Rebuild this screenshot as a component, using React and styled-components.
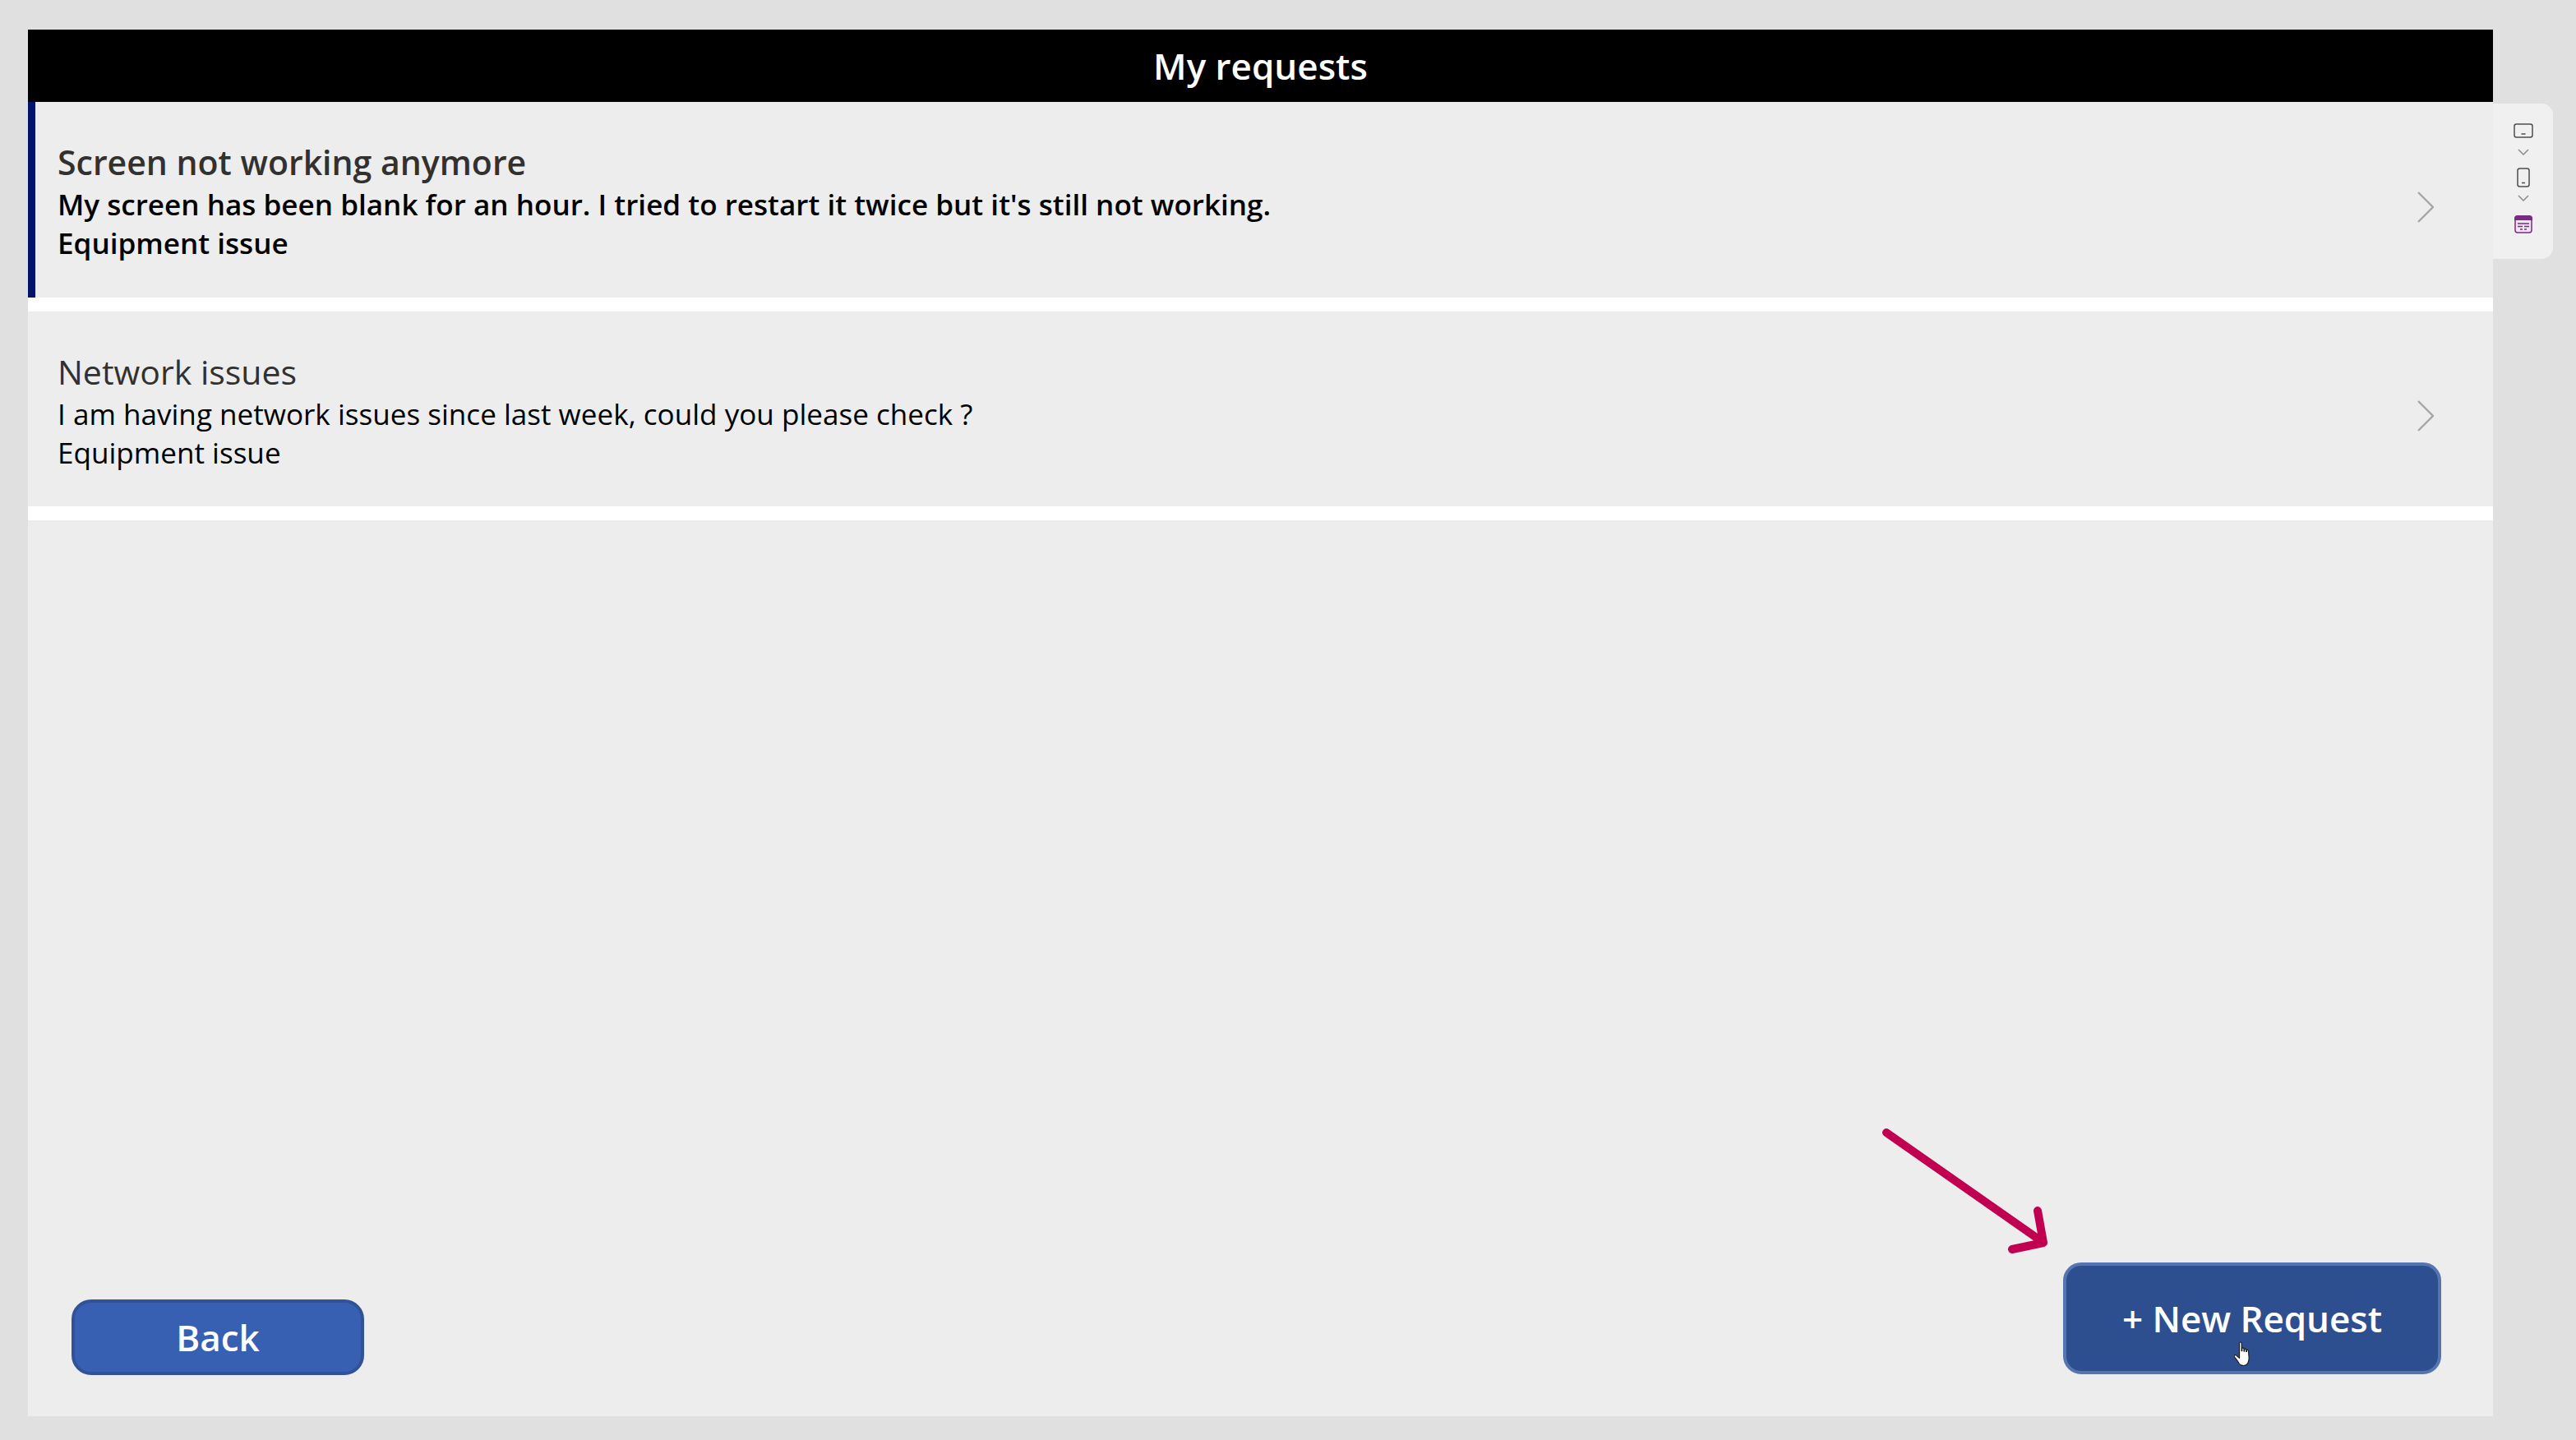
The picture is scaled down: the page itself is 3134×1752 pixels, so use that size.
import { createGlobalStyle, styled } from "styled-components";

const requests = [
  {
    title: "Screen not working anymore",
    body: "My screen has been blank for an hour. I tried to restart it twice but it's still not working.",
    category: "Equipment issue",
    selected: true,
  },
  {
    title: "Network issues",
    body: "I am having network issues since last week, could you please check ?",
    category: "Equipment issue",
    selected: false,
  },
];

const App = () => (
  <Page>
    <GlobalStyle />
    <Canvas>
      <Header>My requests</Header>
      <List>
        {requests.map((item) => (
          <Row key={item.title} $selected={item.selected}>
            <RowText $selected={item.selected}>
              <Title>{item.title}</Title>
              <Line>{item.body}</Line>
              <Line>{item.category}</Line>
            </RowText>
            <Chevron viewBox="0 0 20 38" fill="none" stroke="#a6a6a6" strokeWidth="2.4">
              <path d="M1 1l18 18L1 37" />
            </Chevron>
          </Row>
        ))}
      </List>
      <Footer>
        <BackButton>Back</BackButton>
        <NewButton>
          + New Request
          <Hand viewBox="0 0 24 31">
            <path
              d="M6.5 2.2c0-1.6 2.6-1.6 2.6 0v9.4l.6.1V9c0-1.4 2.3-1.4 2.3 0v3l.6.1v-2c0-1.3 2.2-1.3 2.2 0v2.3l.6.1v-1.3c0-1.3 2.1-1.3 2.1 0l.6 8.5c.2 4-1.2 9.8-6.3 9.8-4.2 0-5.4-1.6-6.8-4.6-1-2-3.1-4.300-4.600-6-1.100-1.300.6-3 2.200-1.800l3.900 3.300z"
              fill="#fff"
              stroke="#1c1c1c"
              strokeWidth="1.2"
              strokeLinejoin="round"
            />
          </Hand>
        </NewButton>
        <Arrow viewBox="0 0 204 152" fill="none" stroke="#c20052" strokeWidth="10" strokeLinecap="round">
          <path d="M5 5l190 133" />
          <path d="M189 100l7 39-38 8" strokeLinejoin="round" />
        </Arrow>
      </Footer>
    </Canvas>
    <SidePanel>
      <svg width="24" height="18" viewBox="0 0 24 18" fill="none" stroke="#4d4d4d" strokeWidth="1.500">
        <rect x="1" y="1" width="22" height="16" rx="2.500" />
        <path d="M9.500 13h5" />
      </svg>
      <SmallChevron $top={13} $bottom={15} viewBox="0 0 14 8" fill="none" stroke="#8a8a8a" strokeWidth="1.500">
        <path d="M1 1l6 6 6-6" />
      </SmallChevron>
      <svg width="16" height="24" viewBox="0 0 16 24" fill="none" stroke="#4d4d4d" strokeWidth="1.500">
        <rect x="1" y="1" width="14" height="22" rx="2.500" />
        <path d="M6 18.500h4" />
      </svg>
      <SmallChevron $top={9} $bottom={17} viewBox="0 0 14 8" fill="none" stroke="#8a8a8a" strokeWidth="1.500">
        <path d="M1 1l6 6 6-6" />
      </SmallChevron>
      <svg width="22" height="22" viewBox="0 0 22 22">
        <rect x="1" y="1" width="20" height="20" rx="3" fill="#f0e6f2" stroke="#7a2a82" strokeWidth="1.500" />
        <path d="M4 0h14a4 4 0 0 1 4 4v2H0V4a4 4 0 0 1 4-4z" fill="#7a2a82" />
        <path
          d="M4 10h14M4 13.500h6M12 13.500h6M7 17h3M12 17h3"
          stroke="#7a2a82"
          strokeWidth="1.400"
        />
      </svg>
    </SidePanel>
  </Page>
);

const GlobalStyle = createGlobalStyle`
  html, body {
    margin: 0;
    background: #e0e0e0;
  }
`;

const Page = styled.div`
  display: flex;
  align-items: flex-start;
  width: 3134px;
  height: 1752px;
  box-sizing: border-box;
  padding: 36px 0 0 34px;
  overflow: hidden;
  font-family: "Open Sans", "Liberation Sans", sans-serif;
`;

const Canvas = styled.main`
  display: flex;
  flex-direction: column;
  width: 2999px;
  height: 1687px;
  background: #ededed;
`;

const Header = styled.header`
  height: 88px;
  flex: none;
  display: flex;
  align-items: center;
  justify-content: center;
  background: #000;
  color: #fff;
  font-size: 44px;
  font-weight: 600;
`;

const List = styled.div`
  display: flex;
  flex-direction: column;
`;

const Row = styled.div`
  display: flex;
  align-items: center;
  justify-content: space-between;
  height: 237.5px;
  box-sizing: border-box;
  padding: 18px 72px 0 ${(p) => (p.$selected ? "27px" : "36px")};
  border-left: ${(p) => (p.$selected ? "9px solid #00146e" : "0")};
  margin-bottom: 17px;
  box-shadow: 0 17px 0 #fff;
`;

const RowText = styled.div`
  display: flex;
  flex-direction: column;
  margin-top: -15px;
  font-weight: ${(p) => (p.$selected ? 600 : 400)};
  color: #000;
`;

const Title = styled.div`
  font-size: 41px;
  line-height: 56px;
  color: #323130;
`;

const Line = styled.div`
  font-size: 35.1px;
  line-height: 47px;
`;

const Chevron = styled.svg`
  width: 20px;
  height: 38px;
`;

const Footer = styled.div`
  position: relative;
  flex: 1;
  display: flex;
  align-items: flex-end;
  justify-content: space-between;
  padding: 0 63px 51px 53px;
`;

const BaseButton = styled.button`
  display: flex;
  align-items: center;
  justify-content: center;
  box-sizing: border-box;
  color: #fff;
  font-family: inherit;
  font-weight: 600;
  padding: 0;
`;

const BackButton = styled(BaseButton)`
  width: 356px;
  height: 92px;
  margin-bottom: -1px;
  border: 4px solid #315298;
  border-radius: 24px;
  background: #3760b3;
  font-size: 44px;
`;

const NewButton = styled(BaseButton)`
  position: relative;
  width: 460px;
  height: 136px;
  border: 4px solid #5675b0;
  border-radius: 22px;
  background: #2e4f8f;
  font-size: 44px;
  letter-spacing: -0.05px;
`;

const Hand = styled.svg`
  position: absolute;
  left: 204px;
  top: 92px;
  width: 24px;
  height: 31px;
`;

const Arrow = styled.svg`
  position: absolute;
  right: 539px;
  bottom: 198px;
  width: 204px;
  height: 152px;
`;

const SidePanel = styled.aside`
  display: flex;
  flex-direction: column;
  align-items: center;
  width: 73px;
  height: 189px;
  box-sizing: border-box;
  margin-top: 90px;
  padding-top: 24px;
  background: #f0f0f0;
  border-radius: 0 14px 14px 0;
`;

const SmallChevron = styled.svg`
  width: 14px;
  height: 8px;
  margin: ${(p) => p.$top}px 0 ${(p) => p.$bottom}px;
`;

export default App;
